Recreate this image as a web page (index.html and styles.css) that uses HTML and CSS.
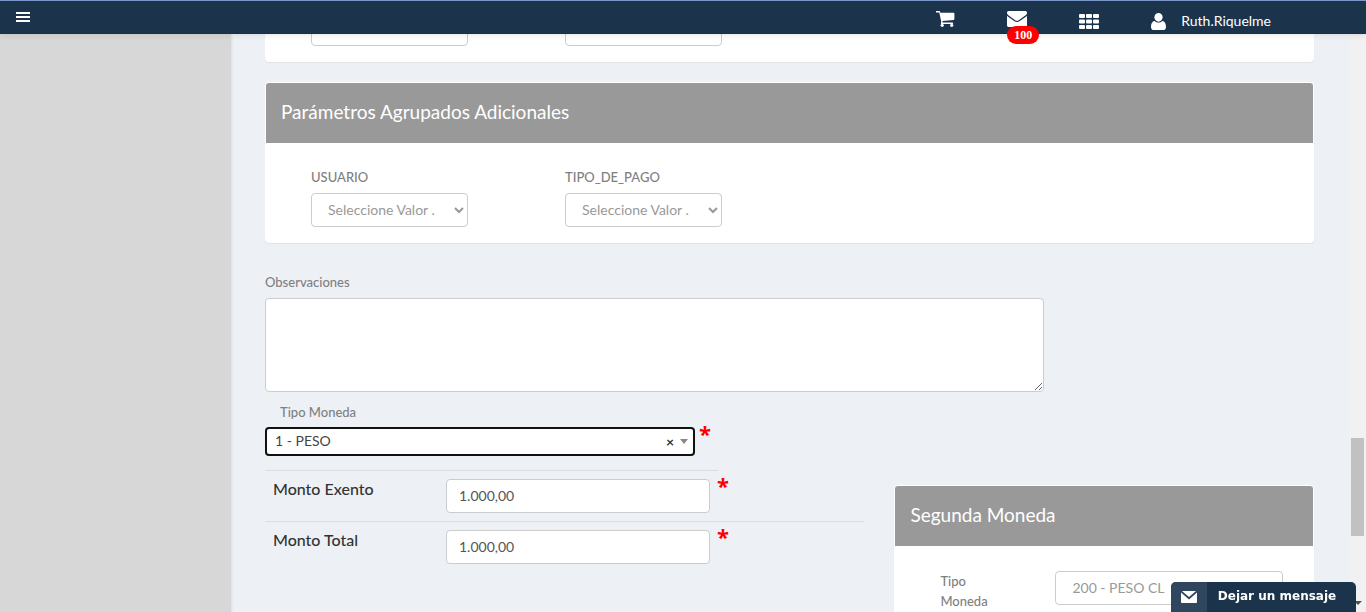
FILE: index.html
```html
<!DOCTYPE html>
<html lang="es">
<head>
<meta charset="utf-8">
<meta name="viewport" content="width=device-width, initial-scale=1">
<title>Parámetros</title>
<link rel="stylesheet" href="styles.css">
</head>
<body>
<header class="topbar">
  <button class="icon-button" type="button" aria-label="Menú">
    <svg width="14" height="10" viewBox="0 0 14 10" fill="#fff"><path d="M0 0h14v2H0zM0 4h14v2H0zM0 8h14v2H0z"/></svg>
  </button>
  <nav class="topnav">
    <a href="#" class="nav-high" aria-label="Carro">
      <svg width="19" height="16" viewBox="0 0 19 16" fill="#fff"><path d="M0 0h3.3c.5 0 .8.4.9 1l.1.8H17.6c.5 0 .8.3.8.8V8c0 .5-.3.8-.8.9L6.5 10.1l.2 1.5H16.5c.4 0 .7.3.7.7s-.3.7-.7.7H5.6c-.6 0-.9-.5-.7-1l.4-1L3.3 1.5H0z"/><circle cx="6.2" cy="14.3" r="1.6"/><circle cx="15.7" cy="14.3" r="1.6"/></svg>
    </a>
    <a href="#" class="nav-high nav-mail" aria-label="Mensajes">
      <svg width="20" height="16" viewBox="0 0 20 16" fill="#fff"><path d="M1.8 0h16.4C19.3 0 20 .7 20 1.7c0 1.200-.8 2.200-1.700 2.900l-6.200 4.300c-.7.5-1.400.9-2.100.9s-1.400-.4-2.100-.9L1.700 4.600C.8 4 0 2.800 0 1.800 0 .8.700 0 1.800 0z"/><path d="M0 4.700c.3.400.7.7 1.100 1l6.100 4.200c.9.600 1.800 1.100 2.800 1.100s1.900-.5 2.800-1.100l6.100-4.200c.4-.3.800-.6 1.100-1v9.500c0 1-.8 1.800-1.800 1.800H1.800c-1 0-1.800-.8-1.800-1.800z"/></svg>
      <span class="badge">100</span>
    </a>
    <a href="#" aria-label="Aplicaciones">
      <svg width="20" height="15" viewBox="0 0 20 15" fill="#fff"><g id="r"><rect width="6" height="4" rx="1"/><rect x="7" width="6" height="4" rx="1"/><rect x="14" width="6" height="4" rx="1"/></g><use href="#r" y="5.5"/><use href="#r" y="11"/></svg>
    </a>
    <a href="#" class="nav-user">
      <svg width="15" height="17" viewBox="0 0 15 17" fill="#fff"><path d="M7.500 0C9.700 0 11.600 1.900 11.600 4.300S9.700 8.700 7.500 8.700 3.400 6.700 3.400 4.300 5.300 0 7.500 0z"/><path d="M3.700 8.100c1 1 2.300 1.500 3.800 1.500s2.800-.5 3.800-1.500c2.600.1 3.700 3 3.700 5.800 0 1.900-1.100 3.100-2.800 3.100H2.800C1.100 17 0 15.800 0 13.900c0-2.800 1.100-5.700 3.700-5.800z"/></svg>
      <span>Ruth.Riquelme</span>
    </a>
  </nav>
</header>

<div class="layout">
  <aside class="sidebar"></aside>
  <main class="content">
    <section class="card card-previous">
      <div class="fields">
        <select aria-label="Parámetro 1"></select>
        <select aria-label="Parámetro 2"></select>
      </div>
    </section>

    <section class="card">
      <h2 class="card-title">Parámetros Agrupados Adicionales</h2>
      <div class="fields">
        <div class="field">
          <label for="usuario">USUARIO</label>
          <select id="usuario"><option>Seleccione Valor ...</option></select>
        </div>
        <div class="field">
          <label for="pago">TIPO_DE_PAGO</label>
          <select id="pago"><option>Seleccione Valor ...</option></select>
        </div>
      </div>
    </section>

    <div class="notes">
      <label for="obs">Observaciones</label>
      <textarea id="obs"></textarea>
    </div>

    <div class="amounts">
      <div>
        <label class="currency-label" for="moneda">Tipo Moneda</label>
        <div class="currency">
          <div class="combo">
            <select id="moneda"><option>1 - PESO</option></select>
            <button class="combo-clear" type="button" aria-label="Quitar">×</button>
            <span class="combo-caret"></span>
          </div>
          <span class="required">*</span>
        </div>
        <div class="amount amount-short">
          <label for="exento">Monto Exento</label>
          <input id="exento" type="text" value="1.000,00">
          <span class="required">*</span>
        </div>
        <div class="amount">
          <label for="total">Monto Total</label>
          <input id="total" type="text" value="1.000,00">
          <span class="required">*</span>
        </div>
      </div>
      <section class="card card-second">
        <h2 class="card-title">Segunda Moneda</h2>
        <div class="second-field">
          <label for="moneda2">Tipo Moneda</label>
          <select id="moneda2"><option>200 - PESO CL</option></select>
        </div>
      </section>
    </div>
  </main>
  <div class="scrollbar"><div class="thumb"></div><span class="scroll-down"></span></div>
</div>

<button class="chat" type="button">
  <span class="chat-icon">
    <svg width="16" height="12" viewBox="0 0 16 12" fill="#fff"><path d="M1 0h14L8 6z"/><path d="M0 1.500 8 8.500l8-7V11c0 .6-.4 1-1 1H1c-.6 0-1-.4-1-1z"/></svg>
  </span>
  <span class="chat-text">Dejar un mensaje</span>
</button>
</body>
</html>
```
FILE: styles.css
```css
* { box-sizing: border-box; }

body {
  margin: 0;
  height: 100vh;
  display: flex;
  flex-direction: column;
  overflow: hidden;
  background: #edf1f6;
  color: #808080;
  font: 14px/20px Lato, "Open Sans", sans-serif;
}

button { border: 0; padding: 0; background: none; font: inherit; color: inherit; cursor: pointer; }
a { color: #fff; text-decoration: none; }
svg { display: block; }

.topbar {
  flex: none;
  position: relative;
  z-index: 2;
  height: 34px;
  display: flex;
  justify-content: space-between;
  padding: 0 95px 0 16px;
  background: #1b344c;
  border-top: 1px solid #7b96c8;
  border-bottom: 1px solid #1d2c4d;
  box-shadow: 0 1px 6px rgba(60, 40, 60, .12);
}
.icon-button { align-self: center; }

.topnav { display: flex; gap: 52px; align-items: flex-start; }
.topnav a { padding-top: 13px; }
.topnav .nav-high { padding-top: 10px; }
.nav-mail { position: relative; }
.badge {
  position: absolute;
  top: 25px;
  left: 0;
  padding: 0 7px;
  border-radius: 9px;
  background: #f00;
  font: bold 12px/18px "Liberation Serif", serif;
}
.topnav .nav-user {
  display: flex;
  gap: 15px;
  align-items: center;
  padding-top: 10px;
  font-size: 14px;
}

.layout { flex: 1; min-height: 0; display: flex; }
.sidebar { flex: none; width: 231px; background: #d7d7d7; box-shadow: 0 0 3px rgba(0, 0, 0, .15); }
.content { flex: 1; min-width: 0; overflow: hidden; padding: 0 36px 0 34px; }

.card {
  margin-bottom: 20px;
  border: 1px solid #fff;
  border-radius: 4px;
  background: #fff;
  box-shadow: 0 1px 1px rgba(0, 0, 0, .06);
}
.card-previous { margin-top: -47px; }
.card-title {
  margin: 0;
  padding: 17px 15px 19px;
  border-radius: 3px 3px 0 0;
  background: #999;
  color: #fff;
  font-size: 19px;
  font-weight: 400;
  line-height: 24px;
}
.fields { display: flex; gap: 97px; padding: 24px 45px 15px; }
.fields select { width: 157px; padding-right: 16px; }
.field { display: flex; flex-direction: column; gap: 6px; }
label { font-size: 13px; font-weight: 500; }

select, input {
  height: 34px;
  padding: 5px 12px 7px;
  border: 1px solid #ccc;
  border-radius: 4px;
  background-color: #fff;
  color: #999;
  font: inherit;
}

.notes { display: flex; flex-direction: column; gap: 6px; padding-top: 9px; }
textarea {
  width: 779px;
  max-width: 100%;
  height: 94px;
  border: 1px solid #ccc;
  border-radius: 4px;
  font: inherit;
}

.amounts { display: grid; grid-template-columns: 3fr 2fr; align-items: start; }
.currency-label { display: block; padding: 10px 15px 5px; }
.currency { display: flex; gap: 4px; height: 43px; align-items: flex-start; }
.combo { position: relative; width: 430px; }
.combo select {
  display: block;
  appearance: none;
  width: 100%;
  height: 29px;
  padding: 0 8px 2px;
  border: 2px solid #111;
  color: #444;
}
.combo-clear {
  position: absolute;
  top: 5px;
  right: 21px;
  color: #333;
  font-weight: 700;
}
.combo-caret {
  position: absolute;
  top: 12px;
  right: 7px;
  border: 4px solid transparent;
  border-top: 5px solid #888;
  border-bottom: 0;
}
.required { color: #f00; font: bold 22px/12px "Open Sans", sans-serif; }

.amount {
  display: flex;
  align-items: flex-start;
  width: 599px;
  height: 51px;
  padding: 8px 8px 0;
  border-top: 1px solid #dadfe2;
}
.amount-short { width: 453px; }
.amount label { flex: none; width: 173px; color: #333; font-size: 16px; line-height: 20px; }
.amount input { flex: none; width: 264px; color: #555; }
.amount .required { margin-left: 7px; }

.card-second { margin-top: 93px; }
.second-field { display: flex; gap: 55px; padding: 25px 30px 40px 45px; }
.second-field label { width: 60px; }
.second-field select { flex: 1; }

.scrollbar { flex: none; position: relative; width: 16px; padding: 404px 2px 0 1px; background: #f1f1f1; }
.thumb { height: 98px; background: #c1c1c1; }
.scroll-down {
  position: absolute;
  right: 4px;
  bottom: 7px;
  border: 4px solid transparent;
  border-top-color: #505050;
  border-bottom: 0;
}

.chat {
  position: fixed;
  z-index: 3;
  right: 10px;
  bottom: 0;
  display: flex;
  width: 185px;
  height: 30px;
  overflow: hidden;
  border-radius: 5px 5px 0 0;
  background: #1b344c;
  color: #fff;
  font: bold 12px/28px "DejaVu Sans", sans-serif;
}
.chat-icon { display: grid; place-items: center; width: 36px; height: 30px; background: #30465f; }
.chat-text { flex: 1; padding-right: 9px; white-space: nowrap; text-align: center; }
```
